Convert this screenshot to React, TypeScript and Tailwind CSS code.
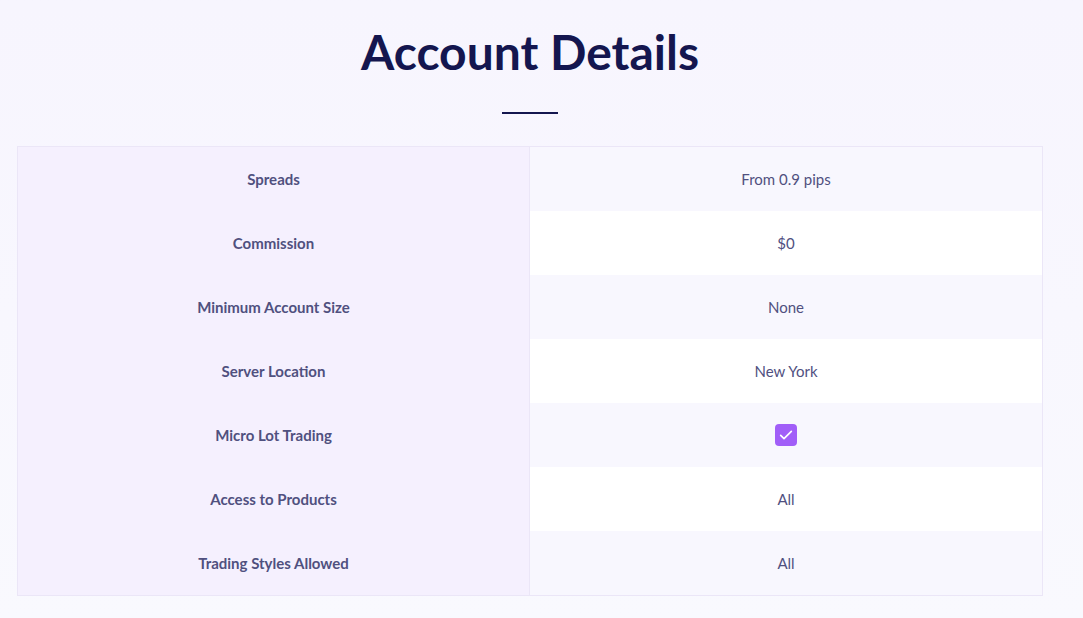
const rows: { label: string; value: string | null }[] = [
  { label: "Spreads", value: "From 0.9 pips" },
  { label: "Commission", value: "$0" },
  { label: "Minimum Account Size", value: "None" },
  { label: "Server Location", value: "New York" },
  { label: "Micro Lot Trading", value: null },
  { label: "Access to Products", value: "All" },
  { label: "Trading Styles Allowed", value: "All" },
];

export default function App() {
  return (
    <div className="h-[618px] w-[1083px] overflow-hidden bg-gradient-to-b from-[#f7f5fe] to-[#f9f9fe] font-[Lato,sans-serif]">
      <div className="mx-[17px] w-[1026px]">
        <h1 className="pt-[22px] text-center text-[48px] font-bold leading-[60px] text-[#14164f]">Account Details</h1>
        <div className="mx-auto mt-[30px] h-[2px] w-[56px] bg-[#14164f]" />
      </div>
      <div className="mx-[17px] mt-[32px] w-[1026px] border border-[#ebe6f7]">
        {rows.map((r, i) => (
          <div key={r.label} className="flex h-[64px] text-[15px] text-[#50507f]">
            <div className="flex w-[512px] items-center justify-center border-r border-[#ebe6f7] bg-[#f5f0fe] font-bold">
              {r.label}
            </div>
            <div className={`flex flex-1 items-center justify-center ${i % 2 === 0 ? "bg-[#f8f7fe]" : "bg-white"}`}>
              {r.value ?? (
                <span className="flex h-[22px] w-[22px] items-center justify-center rounded-[4px] bg-[#a15ef8]">
                  <svg width="16" height="16" viewBox="0 0 24 24" fill="none" stroke="white" strokeWidth="2.5" strokeLinecap="round" strokeLinejoin="round">
                    <path d="M4 12.5l5 5L20 6.5" />
                  </svg>
                </span>
              )}
            </div>
          </div>
        ))}
      </div>
    </div>
  );
}
